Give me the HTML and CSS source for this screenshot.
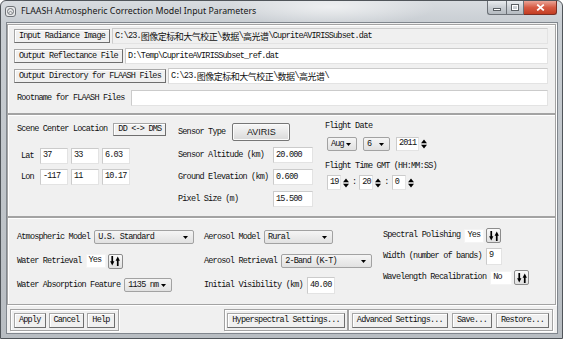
FILE: index.html
```html
<!DOCTYPE html>
<html lang="zh-CN">
<head>
  <meta charset="UTF-8">
  <title>FLAASH Atmospheric Correction Model Input Parameters</title>
  <link rel="stylesheet" href="styles.css">
</head>
<body>
<div class="window">

  <div class="titlebar">
    <svg class="app-icon" width="11" height="11" viewBox="0 0 11 11">
      <rect x="0.5" y="0.5" width="10" height="10" rx="2.5" fill="#e9eaeb" stroke="#6f7378"/>
      <circle cx="5.5" cy="5.5" r="3" fill="none" stroke="#6f7378"/>
      <path d="M3.6 6.6 Q5.5 4.2 7.4 6.6" fill="none" stroke="#6f7378" stroke-width="0.8"/>
    </svg>
    <span class="title">FLAASH Atmospheric Correction Model Input Parameters</span>
    <div class="win-controls">
      <span class="wc wc-min"><span class="glyph-min"></span></span>
      <span class="wc wc-max"><span class="glyph-max"></span></span>
      <span class="wc wc-close">
        <svg width="9" height="7" viewBox="0 0 9 7"><path d="M1.2 0.6 L7.8 6.4 M7.8 0.6 L1.2 6.4" stroke="#fff" stroke-width="1.8"/></svg>
      </span>
    </div>
  </div>

  <div class="client">

    <!-- fichiers -->
    <div class="section files">
      <div class="file-row">
        <button class="btn">Input Radiance Image</button>
        <span class="field field-ro">C:\23.<span class="cjk">图像定标和大气校正</span>\<span class="cjk">数据</span>\<span class="cjk">高光谱</span>\CupriteAVIRISSubset.dat</span>
      </div>
      <div class="file-row">
        <button class="btn">Output Reflectance File</button>
        <span class="field">D:\Temp\CupriteAVIRISSubset_ref.dat</span>
      </div>
      <div class="file-row">
        <button class="btn">Output Directory for FLAASH Files</button>
        <span class="field">C:\23.<span class="cjk">图像定标和大气校正</span>\<span class="cjk">数据</span>\<span class="cjk">高光谱</span>\</span>
      </div>
      <div class="file-row rootname">
        <span>Rootname for FLAASH Files</span>
        <span class="field"></span>
      </div>
    </div>

    <!-- scene / sensor / flight -->
    <div class="section scene">
      <div class="col-loc">
        <div class="loc-head">
          <span>Scene Center Location</span>
          <button class="btn btn-dms">DD &lt;-&gt; DMS</button>
        </div>
        <div class="coord-row">
          <span class="coord-label">Lat</span>
          <span class="field f-coord">37</span>
          <span class="field f-coord">33</span>
          <span class="field f-coord">6.03</span>
        </div>
        <div class="coord-row">
          <span class="coord-label">Lon</span>
          <span class="field f-coord">-117</span>
          <span class="field f-coord">11</span>
          <span class="field f-coord">10.17</span>
        </div>
      </div>

      <div class="col-sensor">
        <div class="sensor-head">
          <span>Sensor Type</span>
          <button class="btn-aviris">AVIRIS</button>
        </div>
        <div class="sensor-grid">
          <span>Sensor Altitude (km)</span><span class="field">20.000</span>
          <span>Ground Elevation (km)</span><span class="field">0.600</span>
          <span>Pixel Size (m)</span><span class="field">15.500</span>
        </div>
      </div>

      <div class="col-flight">
        <div class="flight-label">Flight Date</div>
        <div class="date-row">
          <span class="combo c-month">Aug<svg width="5" height="3" viewBox="0 0 5 3"><path d="M0 0H5L2.5 3Z"/></svg></span>
          <span class="combo c-day">6<svg width="5" height="3" viewBox="0 0 5 3"><path d="M0 0H5L2.5 3Z"/></svg></span>
          <span class="spin">
            <span class="field f-year">2011</span>
            <svg width="6" height="10" viewBox="0 0 6 10"><path d="M0 4.2H6L3 0.6Z M0 5.8H6L3 9.4Z"/></svg>
          </span>
        </div>
        <div class="flight-label second">Flight Time GMT (HH:MM:SS)</div>
        <div class="time-row">
          <span class="spin">
            <span class="field f-time">19</span>
            <svg width="6" height="10" viewBox="0 0 6 10"><path d="M0 4.2H6L3 0.6Z M0 5.8H6L3 9.4Z"/></svg>
          </span>
          <span>:</span>
          <span class="spin">
            <span class="field f-time">20</span>
            <svg width="6" height="10" viewBox="0 0 6 10"><path d="M0 4.2H6L3 0.6Z M0 5.8H6L3 9.4Z"/></svg>
          </span>
          <span>:</span>
          <span class="spin">
            <span class="field f-time">0</span>
            <svg width="6" height="10" viewBox="0 0 6 10"><path d="M0 4.2H6L3 0.6Z M0 5.8H6L3 9.4Z"/></svg>
          </span>
        </div>
      </div>
    </div>

    <!-- modele -->
    <div class="section model">
      <div class="mcol mcol-1">
        <div class="mrow">
          <span>Atmospheric Model</span>
          <span class="combo c-atm">U.S. Standard<svg width="5" height="3" viewBox="0 0 5 3"><path d="M0 0H5L2.5 3Z"/></svg></span>
        </div>
        <div class="mrow">
          <span>Water Retrieval</span>
          <span class="toggle-group">
            <span class="field f-yesno">Yes</span>
            <span class="toggle"><svg width="10" height="10" viewBox="0 0 10 10"><path d="M1.4 0H3.1V5.2H4.4L2.25 9.6L0.1 5.2H1.4Z M6.9 10H8.6V4.8H9.9L7.75 0.4L5.6 4.8H6.9Z"/></svg></span>
          </span>
        </div>
        <div class="mrow">
          <span>Water Absorption Feature</span>
          <span class="combo c-water">1135 nm<svg width="5" height="3" viewBox="0 0 5 3"><path d="M0 0H5L2.5 3Z"/></svg></span>
        </div>
      </div>

      <div class="mcol mcol-2">
        <div class="mrow">
          <span>Aerosol Model</span>
          <span class="combo c-aer">Rural<svg width="5" height="3" viewBox="0 0 5 3"><path d="M0 0H5L2.5 3Z"/></svg></span>
        </div>
        <div class="mrow">
          <span>Aerosol Retrieval</span>
          <span class="combo c-ret">2-Band (K-T)<svg width="5" height="3" viewBox="0 0 5 3"><path d="M0 0H5L2.5 3Z"/></svg></span>
        </div>
        <div class="mrow">
          <span>Initial Visibility (km)</span>
          <span class="field f-vis">40.00</span>
        </div>
      </div>

      <div class="mcol mcol-3">
        <div class="mrow">
          <span>Spectral Polishing</span>
          <span class="toggle-group">
            <span class="field f-yesno">Yes</span>
            <span class="toggle"><svg width="10" height="10" viewBox="0 0 10 10"><path d="M1.4 0H3.1V5.2H4.4L2.25 9.6L0.1 5.2H1.4Z M6.9 10H8.6V4.8H9.9L7.75 0.4L5.6 4.8H6.9Z"/></svg></span>
          </span>
        </div>
        <div class="mrow">
          <span>Width (number of bands)</span>
          <span class="field f-bands">9</span>
        </div>
        <div class="mrow">
          <span>Wavelength Recalibration</span>
          <span class="toggle-group">
            <span class="field f-yesno f-no">No</span>
            <span class="toggle"><svg width="10" height="10" viewBox="0 0 10 10"><path d="M1.4 0H3.1V5.2H4.4L2.25 9.6L0.1 5.2H1.4Z M6.9 10H8.6V4.8H9.9L7.75 0.4L5.6 4.8H6.9Z"/></svg></span>
          </span>
        </div>
      </div>
    </div>

    <!-- boutons -->
    <div class="actions">
      <div class="btn-group">
        <button class="btn">Apply</button>
        <button class="btn">Cancel</button>
        <button class="btn">Help</button>
      </div>
      <div class="btn-group group-right">
        <button class="btn">Hyperspectral Settings...</button>
      </div>
      <div class="btn-group group-adv">
        <button class="btn">Advanced Settings...</button>
        <button class="btn">Save...</button>
        <button class="btn">Restore...</button>
      </div>
    </div>

  </div>
</div>
</body>
</html>
```

FILE: styles.css
```css
* {
  box-sizing: border-box;
}

body {
  margin: 0;
  width: 563px;
  height: 339px;
  overflow: hidden;
  background: #fff;
  font-family: "Liberation Mono", "Noto Sans CJK SC", monospace;
  font-size: 8.5px;
  letter-spacing: -0.8px;
  line-height: 1;
  color: #111;
}

/* fenetre */
.window {
  width: 563px;
  height: 339px;
  display: flex;
  flex-direction: column;
  border: 1px solid #50555a;
  border-radius: 6px 6px 0 0;
  background:
    radial-gradient(ellipse 150px 28px at 330px 6px, rgba(255, 255, 255, 0.6), rgba(255, 255, 255, 0) 70%),
    linear-gradient(to bottom, #d8dce0 0, #c9ced3 21px, #b8bdc2 100%);
}

.titlebar {
  height: 21px;
  flex-shrink: 0;
  display: flex;
  align-items: center;
  gap: 5px;
  padding-left: 4px;
}

.title {
  font-family: "Noto Sans", sans-serif;
  font-size: 8.8px;
  letter-spacing: 0;
  color: #151515;
}

.win-controls {
  margin-left: auto;
  margin-right: 5px;
  align-self: flex-start;
  display: flex;
  height: 14px;
}

.wc {
  display: flex;
  align-items: center;
  justify-content: center;
  height: 14px;
  border: 1px solid #6c7177;
  border-top: none;
  background: linear-gradient(to bottom, #e9ecef, #c9ced3 50%, #b5bbc1);
}

.wc-min {
  width: 19px;
  border-right: none;
  border-radius: 0 0 0 3px;
}

.wc-max {
  width: 18px;
}

.wc-close {
  width: 33px;
  border-left: none;
  border-color: #7a2e24;
  border-radius: 0 0 3px 0;
  background: linear-gradient(to bottom, #eaa496, #d65a43 50%, #c33d22);
}

.glyph-min {
  width: 8px;
  height: 3px;
  margin-top: 4px;
  background: #fff;
  border: 1px solid #5a5f64;
}

.glyph-max {
  width: 8px;
  height: 7px;
  border: 1px solid #5a5f64;
  box-shadow: inset 0 0 0 1px #fff;
}

.client {
  flex: 1;
  margin: 0 4px 4px 5px;
  background: #f0f0f0;
  border: 1px solid #80868d;
  display: flex;
  flex-direction: column;
}

.section {
  margin-right: 1px;
  border: 1px solid #a3a3a3;
  box-shadow: inset 1px 1px 0 #fff, 1px 1px 0 #fff;
}

.cjk {
  font-family: "Noto Sans CJK SC", sans-serif;
  font-size: 9px;
  letter-spacing: -0.5px;
}

/* controles communs */
.btn {
  font: inherit;
  letter-spacing: inherit;
  color: inherit;
  height: 14px;
  padding: 0 4px;
  background: #f0f0f0;
  border: 1px solid #a6a6a6;
  border-right-color: #6e6e6e;
  border-bottom-color: #6e6e6e;
  box-shadow: inset 1px 1px 0 #fff;
  border-radius: 0;
  white-space: nowrap;
}

.field {
  display: flex;
  align-items: center;
  height: 16px;
  padding: 0 2px;
  background: #fff;
  border: 1px solid #e3e3e3;
  border-top-color: #cbcbcb;
  border-left-color: #cbcbcb;
  white-space: nowrap;
  overflow: hidden;
}

.field-ro {
  background: #f0f0f0;
}

.combo {
  display: flex;
  align-items: center;
  justify-content: space-between;
  height: 14px;
  padding: 0 5px 0 3px;
  background: linear-gradient(to bottom, #f5f5f5, #e1e1e1);
  border: 1px solid #a2a2a2;
  border-radius: 2px;
  white-space: nowrap;
}

.spin {
  display: flex;
  align-items: center;
  gap: 2px;
}

.toggle-group {
  display: flex;
  align-items: center;
  gap: 2px;
}

.toggle {
  width: 15px;
  height: 15px;
  display: flex;
  align-items: center;
  justify-content: center;
  background: linear-gradient(to bottom, #fafafa, #e0e0e0);
  border: 1px solid #8c8c8c;
  border-radius: 2px;
}

/* section fichiers */
.files {
  margin-top: 1px;
  height: 90px;
  padding: 3px 7px 0 6px;
  display: flex;
  flex-direction: column;
  gap: 4px;
}

.file-row {
  height: 16px;
  display: flex;
  align-items: center;
  gap: 2px;
}

.file-row .field {
  flex: 1;
}

.rootname {
  margin-top: 2px;
  padding-left: 3px;
  gap: 6px;
}

/* section scene */
.scene {
  height: 103px;
  padding: 8px 0 0 9px;
  display: flex;
}

.col-loc {
  width: 161px;
}

.loc-head {
  height: 13px;
  display: flex;
  align-items: center;
  gap: 6px;
}

.btn-dms {
  height: 13px;
}

.coord-row {
  height: 16px;
  margin-top: 5px;
  display: flex;
  align-items: center;
  gap: 3px;
}

.loc-head + .coord-row {
  margin-top: 12px;
}

.coord-label {
  width: 20px;
  padding-left: 4px;
}

.f-coord {
  width: 28px;
  align-items: flex-start;
  padding-top: 2px;
}

.col-sensor {
  width: 147px;
}

.sensor-head {
  height: 18px;
  display: flex;
  align-items: center;
  gap: 7px;
}

.btn-aviris {
  width: 58px;
  height: 18px;
  padding: 0;
  font-family: "Liberation Sans", sans-serif;
  font-size: 9px;
  letter-spacing: 0;
  color: #1a1a1a;
  background: linear-gradient(to bottom, #f7f7f7, #e9e9e9 50%, #d9d9d9);
  border: 1px solid #767676;
  border-radius: 2px;
  box-shadow: inset 0 0 0 1px #fbfbfb;
}

.sensor-grid {
  margin-top: 6px;
  display: grid;
  grid-template-columns: 95px 40px;
  grid-auto-rows: 16px;
  row-gap: 6px;
  align-items: center;
}

.col-flight {
  flex: 1;
  margin-top: -2px;
}

.flight-label {
  height: 10px;
  line-height: 10px;
}

.flight-label.second {
  margin-top: 10px;
}

.date-row {
  height: 14px;
  margin-top: 6px;
  padding-left: 2px;
  display: flex;
  align-items: center;
  gap: 6px;
}

.c-month {
  width: 30px;
}

.c-day {
  width: 27px;
}

.f-year {
  width: 23px;
  height: 14px;
  align-items: flex-start;
  padding-top: 1px;
}

.time-row {
  height: 15px;
  margin-top: 4px;
  padding-left: 2px;
  display: flex;
  align-items: center;
  gap: 3px;
}

.f-time {
  width: 14px;
  height: 15px;
}

/* section modele */
.model {
  height: 88px;
  padding: 12px 0 0 9px;
  display: flex;
}

.mcol {
  display: flex;
  flex-direction: column;
  gap: 10px;
}

.mcol-1 {
  width: 187px;
}

.mcol-2 {
  width: 179px;
}

.mcol-3 {
  margin-top: -2px;
  gap: 6px;
}

.mrow {
  height: 14px;
  display: flex;
  align-items: center;
  gap: 4px;
}

.mcol-3 .mrow {
  height: 15px;
}

.c-atm {
  width: 100px;
}

.c-water {
  width: 48px;
}

.c-aer {
  width: 69px;
}

.c-ret {
  width: 91px;
}

.f-vis {
  width: 28px;
  height: 17px;
}

.f-yesno {
  width: 20px;
  height: 14px;
  align-items: flex-start;
  padding-top: 1px;
  border-color: #f4f4f4;
}

.f-no {
  width: 22px;
}

.f-bands {
  width: 16px;
  height: 17px;
  align-items: flex-start;
  padding-top: 2px;
}

/* barre de boutons */
.actions {
  flex: 1;
  display: flex;
  padding: 4px 4px 0 3px;
}

.btn-group {
  height: 22px;
  display: flex;
  gap: 3px;
  padding: 3px 3px 2px 3px;
  border: 1px solid #a3a3a3;
  box-shadow: inset 1px 1px 0 #fff, 1px 1px 0 #fff;
}

.btn-group .btn {
  height: 15px;
}

.group-right {
  margin-left: auto;
  padding: 3px 2px 2px 2px;
}

.group-adv {
  gap: 4px;
}
```
